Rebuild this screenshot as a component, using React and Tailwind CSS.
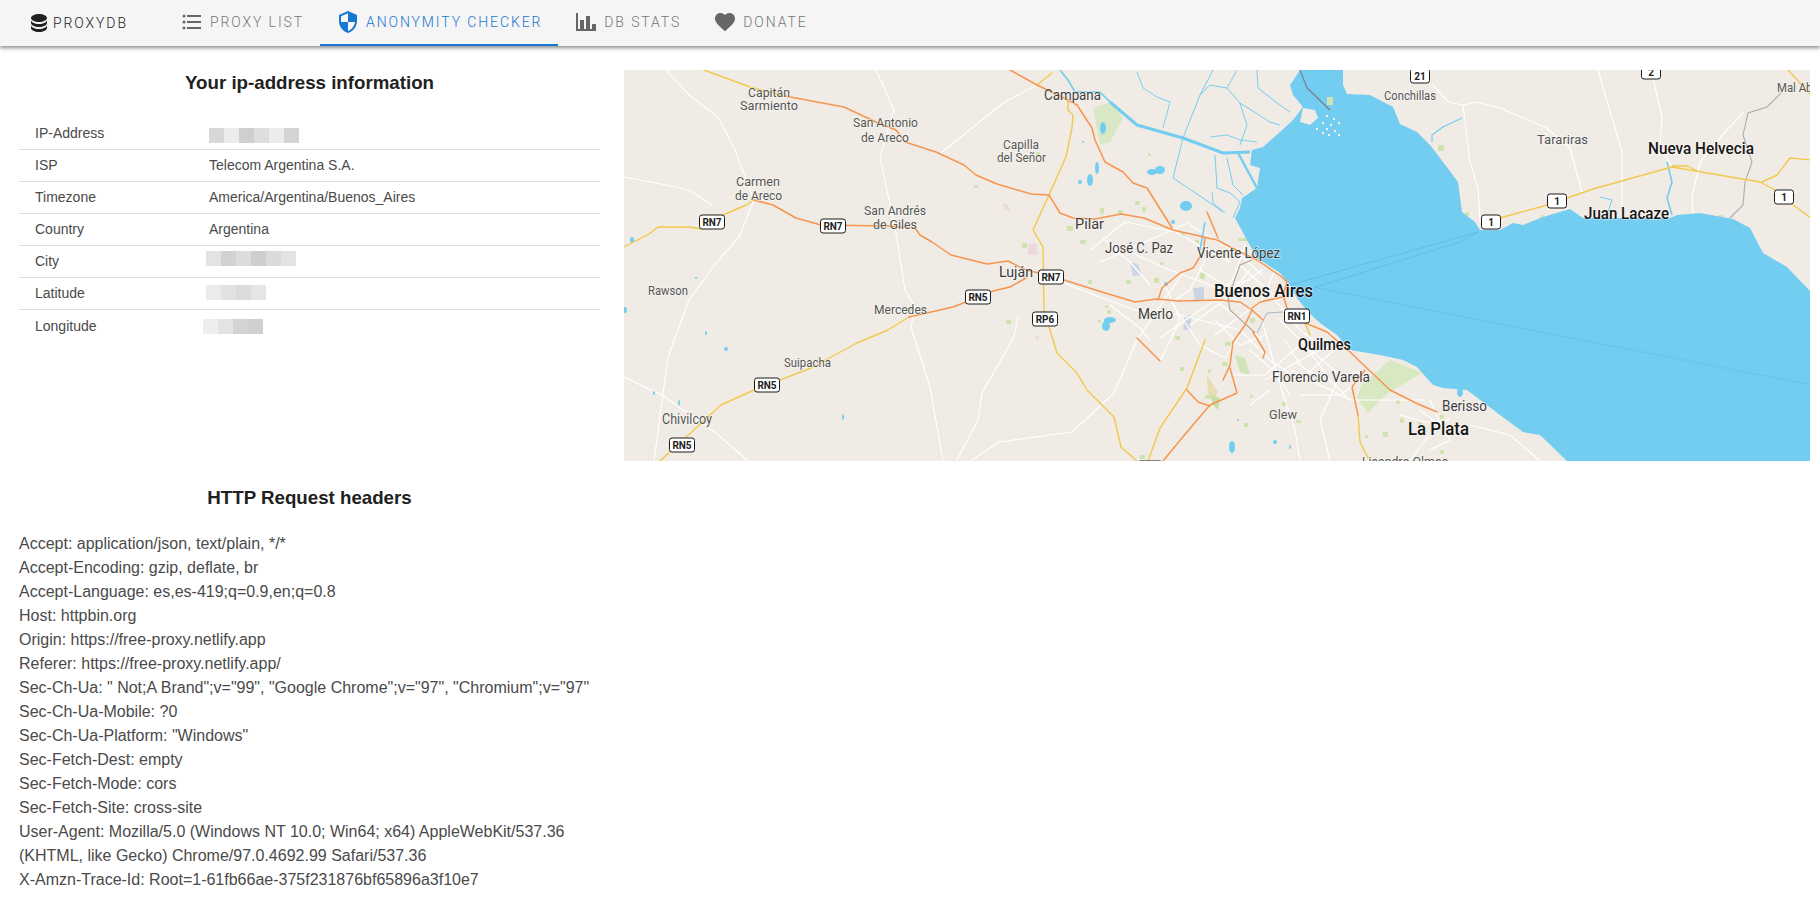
import React from "react";

const mdi = {
  database:
    "M12,3C7.58,3 4,4.79 4,7C4,9.21 7.58,11 12,11C16.42,11 20,9.21 20,7C20,4.79 16.42,3 12,3M4,9V12C4,14.21 7.58,16 12,16C16.42,16 20,14.21 20,12V9C20,11.21 16.42,13 12,13C7.58,13 4,11.21 4,9M4,14V17C4,19.21 7.58,21 12,21C16.42,21 20,19.21 20,17V14C20,16.21 16.42,18 12,18C7.58,18 4,16.21 4,14Z",
  list: "M7,5H21V7H7V5M7,13V11H21V13H7M4,4.5A1.5,1.5 0 0,1 5.5,6A1.5,1.5 0 0,1 4,7.5A1.5,1.5 0 0,1 2.5,6A1.5,1.5 0 0,1 4,4.5M4,10.5A1.5,1.5 0 0,1 5.5,12A1.5,1.5 0 0,1 4,13.5A1.5,1.5 0 0,1 2.5,12A1.5,1.5 0 0,1 4,10.5M7,19V17H21V19H7M4,16.5A1.5,1.5 0 0,1 5.5,18A1.5,1.5 0 0,1 4,19.5A1.5,1.5 0 0,1 2.5,18A1.5,1.5 0 0,1 4,16.5Z",
  security:
    "M12,12H19C18.47,16.11 15.72,19.78 12,20.92V12H5V6.3L12,3.19M12,1L3,5V11C3,16.55 6.84,21.73 12,23C17.16,21.73 21,16.55 21,11V5L12,1Z",
  chart: "M22,21H2V3H4V19H6V10H10V19H12V6H16V19H18V14H22V21Z",
  heart:
    "M12,21.35L10.55,20.03C5.4,15.36 2,12.27 2,8.5C2,5.41 4.42,3 7.5,3C9.24,3 10.91,3.81 12,5.08C13.09,3.81 14.76,3 16.5,3C19.58,3 22,5.41 22,8.5C22,12.27 18.6,15.36 13.45,20.03L12,21.35Z",
};

function Icon({ d, className }) {
  return (
    <svg viewBox="0 0 24 24" className={`w-6 h-6 shrink-0 fill-current ${className || ""}`}>
      <path d={d} />
    </svg>
  );
}

const tabs = [
  { label: "Proxy List", icon: mdi.list },
  { label: "Anonymity Checker", icon: mdi.security, active: true },
  { label: "DB Stats", icon: mdi.chart },
  { label: "Donate", icon: mdi.heart },
];

function Header() {
  return (
    <header className="h-[46px] bg-[#f5f5f5] flex items-stretch pl-[27px] font-['Roboto',sans-serif] font-light text-[14px] tracking-[1.9px] uppercase shadow-[0_2px_3px_0_rgba(0,0,0,0.35),0_3px_6px_0_rgba(0,0,0,0.1)] relative">
      <a className="flex items-center gap-[2px] text-[#212121] w-[137px]">
        <Icon d={mdi.database} />
        <span>ProxyDB</span>
      </a>
      {tabs.map((t) => (
        <a
          key={t.label}
          className={`flex items-center gap-[6px] pl-4 pr-4 border-b-2 ${
            t.active ? "text-[#1976d2] border-[#1976d2]" : "text-[#757575] border-transparent"
          }`}
        >
          <Icon d={t.icon} className={t.active ? "" : "text-[#666666]"} />
          <span>{t.label}</span>
        </a>
      ))}
    </header>
  );
}

const Blur = ({ colors, className }) => (
  <div className={`flex ${className}`}>
    {colors.map((c, i) => (
      <span key={i} className="block w-[15px] h-[15px]" style={{ background: c }} />
    ))}
  </div>
);

const rows = [
  ["IP-Address", <Blur className="mt-[3px]" colors={["#d8d8d8", "#ececec", "#cfcfcf", "#dedede", "#ececec", "#d4d4d4"]} />],
  ["ISP", "Telecom Argentina S.A."],
  ["Timezone", "America/Argentina/Buenos_Aires"],
  ["Country", "Argentina"],
  ["City", <Blur className="-ml-[3px] -mt-[6px]" colors={["#e3e3e3", "#d2d2d2", "#dcdcdc", "#cecece", "#dadada", "#e3e3e3"]} />],
  ["Latitude", <Blur className="-ml-[3px] -mt-[2px]" colors={["#ebebeb", "#e2e2e2", "#dbdbdb", "#e5e5e5"]} />],
  ["Longitude", <Blur className="-ml-[6px]" colors={["#eeeeee", "#e3e3e3", "#d3d3d3", "#d0d0d0"]} />],
];

const water =
  "1300,70 1343,70 1343,85 1347,94 1370,95 1393,107 1400,124 1417,132 1430,145 1440,158 1458,182 1462,212 1475,222 1480,230 1500,230 1513,223 1523,225 1543,217 1570,209 1583,218 1670,218 1677,215 1700,213 1733,219 1750,228 1763,253 1787,267 1811,292 1811,461 1567,461 1540,435 1523,432 1500,415 1467,390 1443,388 1433,385 1417,367 1403,360 1380,355 1350,350 1337,335 1320,323 1308,312 1297,298 1290,285 1280,273 1257,258 1248,242 1235,218 1240,208 1242,198 1257,188 1260,168 1250,165 1252,150 1263,147 1280,132 1293,120 1303,107 1293,95 1290,85";

const orange = [
  "785,96 844,107 876,122 896,130 905,142 936,152 964,165 976,175 997,184 1031,194 1049,195 1060,213 1073,218 1095,219 1121,214 1144,218 1173,230 1217,240 1232,248 1257,260 1282,277 1287,282 1283,295 1287,308",
  "1010,70 1037,85 1068,100 1077,105 1092,128 1095,140 1105,162 1123,172 1133,183 1147,188 1172,228",
  "754,200 773,205 796,218 821,225 888,226 915,228 920,235 932,242 951,255 987,264 1008,261 1026,270 1039,273 1064,280 1102,292 1135,302 1156,299 1179,301 1220,300 1240,302 1252,310 1263,320",
  "909,317 953,307 966,302 993,291 1010,287 1026,278",
  "1158,300 1162,288 1180,273 1193,268 1203,252 1205,238",
  "1207,212 1218,238",
  "1252,308 1260,302 1283,297",
  "1252,310 1245,325 1233,342 1230,365 1223,380",
  "1230,368 1237,393 1210,405 1187,432 1163,461",
  "1187,390 1198,402 1210,406",
  "1253,332 1265,352 1263,358",
  "1137,338 1160,361",
  "1303,322 1327,332 1350,352 1390,390 1418,404 1437,412",
  "1365,370 1352,387 1358,415",
];

const yellow = [
  "704,70 750,87 785,96",
  "1052,73 1037,85",
  "1068,100 1068,110 1073,115 1072,128 1066,157 1049,195 1033,230 1043,247 1044,313 1050,330 1057,353 1077,373 1087,390 1114,417 1121,447 1137,461",
  "624,247 649,234 658,227 689,227 702,229 723,215 746,205 754,200",
  "660,461 721,405 754,390 811,368 857,343 888,330 909,317",
  "1205,340 1187,388 1160,428 1148,461",
  "1305,323 1310,335",
  "1358,415 1360,442 1368,458",
  "1500,218 1547,205 1593,189 1672,167 1760,182 1775,190 1793,205 1811,218",
  "1672,166 1688,166 1697,171",
  "1762,182 1777,175 1790,158 1811,160",
  "1788,70 1811,95",
];

const white = [
  "666,70 689,95 718,117 735,150 754,200 739,237 716,263 689,300 668,357 654,461",
  "624,177 666,185 689,190 712,205",
  "624,377 662,395 716,433 748,461",
  "876,70 894,110 880,157 896,233 905,290 915,307 911,327 930,387 943,461",
  "941,153 1003,103 1037,85",
  "972,460 999,442 1072,432 1114,393 1137,340 1185,270",
  "1018,317 1014,337 982,393 978,420 957,460",
  "1463,105 1470,162 1478,188 1480,222",
  "1433,85 1448,102 1463,105 1477,102 1500,108 1547,128 1570,148 1582,192",
  "1598,70 1622,152 1622,205",
  "1653,78 1662,117 1660,145 1672,167",
  "1743,113 1727,130 1700,162 1692,197 1693,213",
  // Buenos Aires sprawl
  "1039,273 1102,298 1135,310 1180,315 1240,330",
  "1090,250 1125,222 1175,232 1230,262",
  "1130,252 1165,268 1210,285 1240,302",
  "1100,262 1150,240 1190,222",
  "1165,285 1180,320 1160,361",
  "1170,300 1200,345 1225,358 1240,335",
  "1160,338 1200,310 1240,285 1262,270",
  "1190,325 1225,300",
  "1215,335 1262,300 1275,270",
  "1240,330 1270,360 1300,380 1340,345",
  "1262,320 1280,385 1295,430 1300,461",
  "1265,380 1310,355 1345,340",
  "1280,320 1310,350 1340,375 1365,372",
  "1290,370 1350,400 1395,400 1425,400",
  "1230,375 1265,375 1300,345",
  "1250,350 1275,372 1290,395",
  "1225,300 1250,270",
  "1200,270 1225,285 1250,280",
  "1215,320 1240,345 1265,335",
  "1305,345 1330,380 1350,400",
  "1340,375 1320,420 1330,461",
  "1420,410 1440,425 1450,440 1430,450",
  "1430,400 1445,435",
  "1450,418 1425,440 1410,461",
  "1400,415 1425,422 1445,422",
  "1470,425 1510,435 1540,461",
  "1190,225 1215,240 1240,255 1262,275",
  "1105,240 1130,262 1150,285",
  "1110,305 1140,328 1150,340",
  "1240,265 1262,285 1280,300",
  "1215,300 1240,320 1262,340",
  "1275,300 1300,330 1320,345",
  "1285,340 1300,365 1315,375",
  "1245,245 1235,275 1225,290",
  "1205,260 1190,290 1175,300",
  "1300,395 1340,395 1360,380",
  "1270,390 1250,405",
];

const streams = [
  ["1110,102 1137,125 1183,138 1223,153 1250,152", 3],
  ["1238,153 1257,188", 2.4],
  ["1060,70 1068,80 1075,92 1100,92 1110,102", 1.6],
  ["1137,72 1143,88 1157,97 1170,102 1163,128", 0.9],
  ["1213,70 1200,95 1183,138 1173,178 1203,198 1223,212", 1],
  ["1200,95 1210,85 1227,88 1240,103 1270,122 1280,125", 1],
  ["1257,70 1258,88 1277,103 1290,112", 1],
  ["1240,103 1247,125 1240,145", 1],
  ["1227,88 1237,70", 0.9],
  ["1210,137 1227,135 1240,140 1257,142", 0.9],
  ["1215,155 1217,188 1230,193 1240,202 1233,218", 1],
  ["1227,158 1233,185 1243,195", 1],
  ["1212,192 1213,203 1225,213", 0.9],
  ["1462,118 1443,127 1432,135 1432,142", 1.2],
  ["1667,162 1672,182 1667,198 1672,215", 1.6],
  ["1600,197 1612,200 1608,212", 1],
  ["1200,250 1205,222", 1.6],
];

const lakes = [
  [1103, 128, 3, 6], [1152, 172, 5, 3], [1160, 170, 5, 4], [1090, 180, 3, 6], [1080, 182, 2, 2],
  [1186, 206, 6, 5], [1110, 320, 6, 3], [1106, 326, 4, 5], [1166, 284, 2, 2], [1238, 420, 1, 1],
  [632, 240, 2, 3], [696, 278, 1, 1], [706, 333, 1, 2], [726, 349, 2, 2], [654, 393, 1, 2],
  [679, 403, 1, 3], [843, 417, 1, 3], [625, 310, 2, 3], [1232, 447, 3, 6], [1275, 442, 2, 2], [1290, 447, 1, 2],
  [1452, 385, 7, 2], [1460, 392, 3, 5], [1173, 222, 2, 2], [1097, 168, 2, 6], [1083, 142, 1, 1],
];

const greens = [
  [1330, 92, 3, 3], [1438, 145, 4, 4], [1465, 212, 2, 2], [1540, 215, 2, 1], [1718, 215, 3, 1],
  [1148, 153, 1, 1], [1036, 152, 2, 2], [974, 185, 2, 1], [1006, 320, 3, 2], [908, 307, 2, 2],
  [1067, 226, 4, 3], [1100, 208, 2, 4], [1118, 210, 3, 2], [1135, 201, 3, 2], [1142, 207, 2, 3],
  [1080, 240, 4, 2], [1022, 243, 3, 3], [1088, 280, 2, 2], [1107, 310, 2, 2], [1154, 278, 3, 3],
  [1180, 232, 3, 2], [1195, 240, 2, 2], [1230, 248, 4, 1], [1238, 238, 8, 1], [1126, 280, 3, 2],
  [1160, 262, 2, 1], [1105, 305, 1, 1], [1200, 273, 3, 4], [1175, 336, 3, 2], [1225, 342, 4, 2],
  [1222, 362, 4, 2], [1208, 369, 1, 2], [1180, 367, 2, 2], [1250, 318, 3, 3],
  [1244, 423, 2, 2], [1282, 402, 3, 2], [1296, 420, 3, 1], [1396, 400, 2, 2], [1400, 418, 2, 3],
  [1418, 422, 2, 2], [1440, 415, 2, 2], [1383, 432, 3, 3], [1365, 435, 1, 1], [1098, 320, 1, 1],
  [1148, 313, 5, 4], [1250, 395, 1, 1], [1440, 450, 2, 2], [1140, 455, 3, 2], [1205, 395, 3, 2],
];

const patches = [
  ["1093,108 1110,102 1123,118 1110,142 1100,145", "#d9e8c4"],
  ["1390,360 1422,373 1388,393 1368,413 1357,398 1362,385", "#d8e9c2"],
  ["1207,375 1218,392 1213,402 1208,393", "#e6ddb2"],
  ["1210,395 1220,398 1218,410 1213,405", "#c5e0a5"],
  ["1235,355 1245,358 1250,375 1240,372", "#d2e5b8"],
  ["1130,262 1138,264 1142,275 1133,276", "#ccd6e2"],
  ["1193,288 1204,287 1204,300 1195,302", "#ccd6e2"],
  ["1185,316 1192,315 1190,330 1183,330", "#ccd6e2"],
  ["1002,203 1008,205 1011,212 1005,210", "#ecd9dc"],
  ["1028,244 1036,243 1038,254 1028,255", "#ecd9dc"],
  ["1034,336 1040,337 1038,341", "#ecd9dc"],
];

const labels = [
  ["Capitán", 748, 790, 92, 13],
  ["Sarmiento", 740, 798, 105, 13],
  ["San Antonio", 853, 918, 122, 13],
  ["de Areco", 861, 909, 137, 13],
  ["Capilla", 1003, 1039, 144, 13],
  ["del Señor", 997, 1046, 157, 13],
  ["Campana", 1044, 1101, 95, 15, 1],
  ["Carmen", 736, 780, 181, 13],
  ["de Areco", 735, 782, 195, 13],
  ["San Andrés", 864, 926, 210, 13],
  ["de Giles", 873, 917, 224, 13],
  ["Pilar", 1075, 1104, 224, 15, 1],
  ["José C. Paz", 1105, 1173, 248, 15, 1],
  ["Luján", 999, 1033, 272, 15, 1],
  ["Rawson", 648, 688, 290, 13],
  ["Mercedes", 874, 927, 309, 13],
  ["Merlo", 1138, 1173, 314, 15, 1],
  ["Suipacha", 784, 831, 362, 13],
  ["Chivilcoy", 662, 712, 419, 14],
  ["Vicente López", 1197, 1280, 253, 14.5, 1],
  ["Buenos Aires", 1214, 1313, 291, 18, 2],
  ["Quilmes", 1298, 1351, 344, 16, 2],
  ["Florencio Varela", 1272, 1370, 377, 14.5, 1],
  ["Glew", 1269, 1297, 414, 13],
  ["Berisso", 1442, 1487, 406, 14, 1],
  ["La Plata", 1408, 1469, 429, 18, 2],
  ["Juan Lacaze", 1584, 1669, 213, 17, 2],
  ["Nueva Helvecia", 1648, 1754, 148, 17, 2],
  ["Tarariras", 1537, 1588, 139, 13],
  ["Conchillas", 1384, 1436, 95, 13],
  ["Mal Abrigo", 1777, 1832, 87, 13],
  ["Lisandro Olmos", 1362, 1448, 461, 13],
];

const shields = [
  ["RN7", 712, 222], ["RN7", 833, 226], ["RN7", 1051, 277], ["RN5", 978, 297],
  ["RP6", 1045, 319], ["RN5", 767, 385], ["RN5", 682, 445], ["RN1", 1297, 316],
  ["1", 1491, 222], ["1", 1557, 201], ["1", 1784, 197], ["21", 1420, 76], ["2", 1651, 72], ["RN5", 1150, 468],
];

const specks = [
  [1322, 122], [1326, 128], [1330, 124], [1334, 130], [1338, 134], [1328, 134], [1322, 132], [1316, 128],
  [1333, 118], [1326, 115], [1338, 122],
];

const Lines = ({ items, color, width }) =>
  items.map((p, i) => (
    <polyline key={i} points={p} fill="none" stroke={color} strokeWidth={width} strokeLinejoin="round" strokeLinecap="round" />
  ));

function BaseMap() {
  return (
    <svg viewBox="624 70 1186 391" className="block w-[1186px] h-[391px] bg-[#f0ebe4] font-['Roboto',sans-serif]">
      {patches.map(([p, c], i) => (
        <polygon key={i} points={p} fill={c} />
      ))}
      {greens.map(([x, y, w, h], i) => (
        <rect key={i} x={x} y={y} width={w + 2} height={h + 2} rx="1" fill="#cde4b0" />
      ))}
      <Lines items={white} color="#ffffff" width={1.2} />
      <polygon points={water} fill="#72cdf1" />
      <polygon points="1303,108 1315,110 1318,118 1310,125 1300,122" fill="#f0ebe4" />
      {specks.map(([x, y], i) => (
        <rect key={i} x={x} y={y} width="2" height="2" fill="#f7f3ee" />
      ))}
      <rect x="1327" y="97" width="6" height="8" fill="#cfe3b5" />
      {streams.map(([p, w], i) => (
        <polyline key={i} points={p} fill="none" stroke="#72cdf1" strokeWidth={w} strokeLinejoin="round" />
      ))}
      {lakes.map(([x, y, rx, ry], i) => (
        <ellipse key={i} cx={x} cy={y} rx={rx} ry={ry} fill="#72cdf1" />
      ))}
      <polyline points="1290,285 1478,232" fill="none" stroke="#60b8ea" strokeWidth="0.8" />
      <polyline points="1313,288 1460,242 1478,232" fill="none" stroke="#60b8ea" strokeWidth="0.8" />
      <polyline points="1317,288 1811,385" fill="none" stroke="#60b8ea" strokeWidth="0.6" />
      <polyline points="1300,70 1307,88 1330,110" fill="none" stroke="#7a7f90" strokeWidth="1.3" />
      <polyline points="1252,260 1240,265 1228,298 1230,310 1255,333" fill="none" stroke="#b8a79a" strokeWidth="1.2" />
      <polyline points="1257,333 1267,313 1283,312" fill="none" stroke="#a8b8c8" strokeWidth="1" />
      <polyline points="1782,92 1767,107 1748,113 1743,135 1752,162 1745,182 1743,205 1730,218" fill="none" stroke="#a8aeb5" strokeWidth="1.1" />
      <Lines items={yellow} color="#f2c94c" width={1.4} />
      <Lines items={orange} color="#f6954f" width={1.5} />
      {labels.map(([t, x1, x2, cy, size, tone]) => (
        <text
          key={t + x1}
          x={x1}
          y={cy + size * 0.36}
          fontSize={size}
          textLength={x2 - x1}
          lengthAdjust="spacingAndGlyphs"
          fill={tone === 2 ? "#161616" : tone === 1 ? "#3d3d3d" : "#555555"}
          stroke="#ffffff"
          strokeOpacity="0.55"
          strokeWidth="1.5"
          paintOrder="stroke"
          fontWeight={tone === 2 ? 500 : 400}
        >
          {t}
        </text>
      ))}
      {shields.map(([t, cx, cy]) => {
        const w = t.length > 2 ? 25 : 19;
        return (
          <g key={t + cx}>
            <rect x={cx - w / 2} y={cy - 7} width={w} height={14} rx="2.5" fill="#ffffff" stroke="#1a1a1a" strokeWidth="1" />
            <text x={cx} y={cy + 3.6} fontSize="10" fontWeight="700" textAnchor="middle" fill="#222222">
              {t}
            </text>
          </g>
        );
      })}
    </svg>
  );
}

const headerLines = [
  'Accept: application/json, text/plain, */*',
  "Accept-Encoding: gzip, deflate, br",
  "Accept-Language: es,es-419;q=0.9,en;q=0.8",
  "Host: httpbin.org",
  "Origin: https://free-proxy.netlify.app",
  "Referer: https://free-proxy.netlify.app/",
  'Sec-Ch-Ua: " Not;A Brand";v="99", "Google Chrome";v="97", "Chromium";v="97"',
  "Sec-Ch-Ua-Mobile: ?0",
  'Sec-Ch-Ua-Platform: "Windows"',
  "Sec-Fetch-Dest: empty",
  "Sec-Fetch-Mode: cors",
  "Sec-Fetch-Site: cross-site",
  "User-Agent: Mozilla/5.0 (Windows NT 10.0; Win64; x64) AppleWebKit/537.36 (KHTML, like Gecko) Chrome/97.0.4692.99 Safari/537.36",
  "X-Amzn-Trace-Id: Root=1-61fb66ae-375f231876bf65896a3f10e7",
];

export default function App() {
  return (
    <div className="bg-white font-['Liberation_Sans',Arial,sans-serif] text-[#4a4a4a]">
      <Header />
      <div className="flex">
        <section className="w-[605px] ml-[19px] shrink-0">
          <h2 className="w-[581px] h-[72px] pt-[24px] text-center text-[18.72px] leading-[26px] font-bold text-[#212121]">
            Your ip-address information
          </h2>
          <div className="w-[581px] text-[14px]">
            {rows.map(([name, value], i) => (
              <div
                key={name}
                className={`h-[32px] flex items-center ${i < rows.length - 1 ? "border-b border-[#e0e0e0]" : ""}`}
              >
                <div className="w-[190px] pl-4 shrink-0">{name}</div>
                <div>{value}</div>
              </div>
            ))}
          </div>
        </section>
        <div className="mt-6">
          <BaseMap />
        </div>
      </div>
      <section className="w-[581px] ml-[19px] mt-[21px]">
        <h2 className="text-center text-[18.72px] leading-[32px] font-bold text-[#212121] mb-[18px]">HTTP Request headers</h2>
        <div className="text-[16px] leading-[24px]">
          {headerLines.map((l) => (
            <div key={l}>{l}</div>
          ))}
        </div>
      </section>
    </div>
  );
}
